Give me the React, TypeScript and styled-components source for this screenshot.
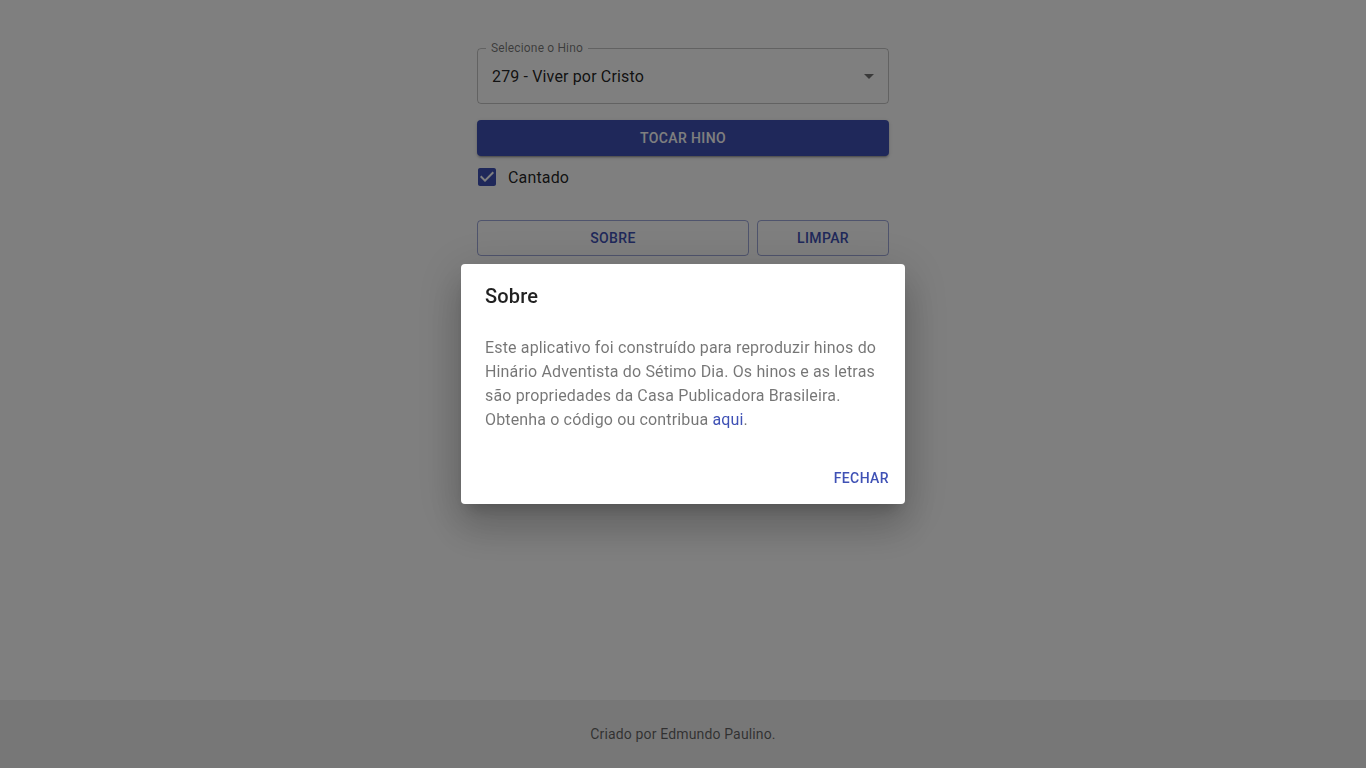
import React from "react";
import styled, { createGlobalStyle } from "styled-components";

const primary = "#3f51b5";

const Global = createGlobalStyle`
  html, body { margin: 0; padding: 0; }
  body {
    font-family: Roboto, "Liberation Sans", Arial, sans-serif;
    background: #ffffff;
    color: rgba(0,0,0,0.87);
  }
  * { box-sizing: border-box; }
`;

const Page = styled.div`
  min-height: 100vh;
  display: flex;
  flex-direction: column;
`;

const Main = styled.main`
  flex: 1;
  display: flex;
  justify-content: center;
  padding-top: 48px;
`;

const Column = styled.div`
  width: 412px;
  display: flex;
  flex-direction: column;
`;

const Field = styled.div`
  position: relative;
  height: 56px;
  border: 1px solid rgba(0,0,0,0.23);
  border-radius: 4px;
  display: flex;
  align-items: center;
  padding: 0 14px;
`;

const FieldLabel = styled.span`
  position: absolute;
  top: -8px;
  left: 8px;
  padding: 0 5px;
  background: #fff;
  font-size: 12px;
  line-height: 14px;
  letter-spacing: 0.15px;
  color: rgba(0,0,0,0.54);
`;

const FieldValue = styled.span`
  flex: 1;
  font-size: 16px;
  line-height: 19px;
  letter-spacing: 0.15px;
  color: rgba(0,0,0,0.87);
`;

const Arrow = styled.svg`
  width: 24px;
  height: 24px;
  margin-right: -7px;
  fill: rgba(0,0,0,0.54);
`;

const ContainedButton = styled.button`
  margin-top: 16px;
  height: 36px;
  border: none;
  border-radius: 4px;
  background: ${primary};
  color: #fff;
  font-family: inherit;
  font-size: 14px;
  font-weight: 500;
  letter-spacing: 0.4px;
  text-transform: uppercase;
  box-shadow: 0 3px 1px -2px rgba(0,0,0,0.2), 0 2px 2px 0 rgba(0,0,0,0.14), 0 1px 5px 0 rgba(0,0,0,0.12);
`;

const CheckRow = styled.label`
  height: 42px;
  display: flex;
  align-items: center;
  font-size: 16px;
  letter-spacing: 0.15px;
  color: rgba(0,0,0,0.87);
`;

const CheckIcon = styled.svg`
  width: 24px;
  height: 24px;
  margin-left: -2px;
  margin-right: 9px;
  fill: ${primary};
`;

const ButtonRow = styled.div`
  margin-top: 22px;
  display: flex;
  gap: 8px;
`;

const OutlinedButton = styled.button<{ $w: number }>`
  width: ${(p) => p.$w}px;
  height: 36px;
  background: transparent;
  border: 1px solid rgba(63,81,181,0.5);
  border-radius: 4px;
  color: ${primary};
  font-family: inherit;
  font-size: 14px;
  font-weight: 500;
  letter-spacing: 0.4px;
  text-transform: uppercase;
`;

const Footer = styled.footer`
  height: 68px;
  background: #eeeeee;
  display: flex;
  align-items: center;
  justify-content: center;
  font-size: 14px;
  letter-spacing: 0.15px;
  color: rgba(0,0,0,0.6);
`;

const Backdrop = styled.div`
  position: fixed;
  inset: 0;
  background: rgba(0,0,0,0.5);
  display: flex;
  align-items: center;
  justify-content: center;
`;

const Dialog = styled.div`
  width: 444px;
  background: #fff;
  border-radius: 4px;
  box-shadow: 0 11px 15px -7px rgba(0,0,0,0.2), 0 24px 38px 3px rgba(0,0,0,0.14), 0 9px 46px 8px rgba(0,0,0,0.12);
  display: flex;
  flex-direction: column;
`;

const DialogTitle = styled.h2`
  margin: 0;
  padding: 16px 24px;
  font-size: 20px;
  font-weight: 500;
  line-height: 32px;
  letter-spacing: 0.15px;
  color: rgba(0,0,0,0.87);
`;

const DialogContent = styled.div`
  padding: 8px 24px;
`;

const DialogText = styled.p`
  margin: 0 0 12px;
  font-size: 16px;
  line-height: 24px;
  letter-spacing: 0.15px;
  color: rgba(0,0,0,0.54);
`;

const Link = styled.a`
  color: ${primary};
  text-decoration: none;
`;

const DialogActions = styled.div`
  padding: 8px;
  display: flex;
  justify-content: flex-end;
`;

const TextButton = styled.button`
  height: 36px;
  padding: 6px 8px;
  background: transparent;
  border: none;
  color: ${primary};
  font-family: inherit;
  font-size: 14px;
  font-weight: 500;
  letter-spacing: 0.4px;
  text-transform: uppercase;
`;

export default function App() {
  return (
    <>
      <Global />
      <Page>
        <Main>
          <Column>
            <Field>
              <FieldLabel>Selecione o Hino</FieldLabel>
              <FieldValue>279 - Viver por Cristo</FieldValue>
              <Arrow viewBox="0 0 24 24">
                <path d="M7 10l5 5 5-5z" />
              </Arrow>
            </Field>
            <ContainedButton>Tocar Hino</ContainedButton>
            <CheckRow>
              <CheckIcon viewBox="0 0 24 24">
                <path d="M19 3H5c-1.11 0-2 .9-2 2v14c0 1.1.89 2 2 2h14c1.11 0 2-.9 2-2V5c0-1.1-.89-2-2-2zm-9 14l-5-5 1.41-1.41L10 14.17l7.59-7.59L19 8l-9 9z" />
              </CheckIcon>
              Cantado
            </CheckRow>
            <ButtonRow>
              <OutlinedButton $w={272}>Sobre</OutlinedButton>
              <OutlinedButton $w={132}>Limpar</OutlinedButton>
            </ButtonRow>
          </Column>
        </Main>
        <Footer>Criado por Edmundo Paulino.</Footer>
      </Page>
      <Backdrop>
        <Dialog>
          <DialogTitle>Sobre</DialogTitle>
          <DialogContent>
            <DialogText>
              Este aplicativo foi construído para reproduzir hinos do Hinário Adventista do Sétimo Dia. Os hinos e as
              letras são propriedades da Casa Publicadora Brasileira. Obtenha o código ou contribua{" "}
              <Link href="#">aqui</Link>.
            </DialogText>
          </DialogContent>
          <DialogActions>
            <TextButton>Fechar</TextButton>
          </DialogActions>
        </Dialog>
      </Backdrop>
    </>
  );
}
